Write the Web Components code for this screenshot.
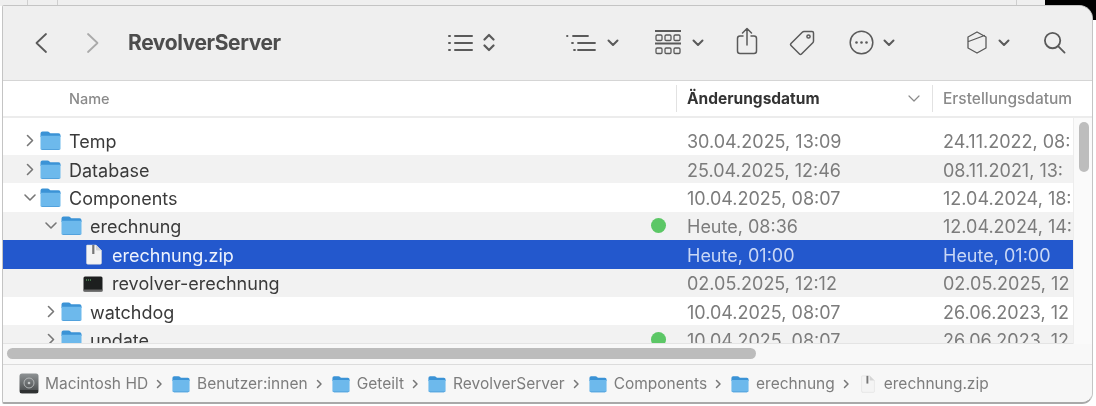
<!DOCTYPE html>
<html>
<head>
<meta charset="utf-8">
<style>
  html, body { margin: 0; height: 100%; }
  body { width: 1096px; height: 406px; overflow: hidden; background: #fff; font-family: Inter, "Liberation Sans", sans-serif; }
</style>
</head>
<body>
<finder-window>
  <finder-toolbar slot="toolbar" title="RevolverServer"></finder-toolbar>
  <list-header slot="header"></list-header>

  <file-row level="0" chevron="right" icon="folder" name="Temp" changed="30.04.2025, 13:09" created="24.11.2022, 08:"></file-row>
  <file-row level="0" chevron="right" icon="folder" name="Database" changed="25.04.2025, 12:46" created="08.11.2021, 13:"></file-row>
  <file-row level="0" chevron="down" icon="folder" name="Components" changed="10.04.2025, 08:07" created="12.04.2024, 18:"></file-row>
  <file-row level="1" chevron="down" icon="folder" name="erechnung" changed="Heute, 08:36" created="12.04.2024, 14:" dot></file-row>
  <file-row level="2" icon="zip" name="erechnung.zip" changed="Heute, 01:00" created="Heute, 01:00" selected></file-row>
  <file-row level="2" icon="exec" name="revolver-erechnung" changed="02.05.2025, 12:12" created="02.05.2025, 12"></file-row>
  <file-row level="1" chevron="right" icon="folder" name="watchdog" changed="10.04.2025, 08:07" created="26.06.2023, 12"></file-row>
  <file-row level="1" chevron="right" icon="folder" name="update" changed="10.04.2025, 08:07" created="26.06.2023, 12" dot></file-row>

  <path-bar slot="path">
    <path-crumb icon="disk">Macintosh HD</path-crumb>
    <path-crumb icon="folder">Benutzer:innen</path-crumb>
    <path-crumb icon="folder">Geteilt</path-crumb>
    <path-crumb icon="folder">RevolverServer</path-crumb>
    <path-crumb icon="folder">Components</path-crumb>
    <path-crumb icon="folder">erechnung</path-crumb>
    <path-crumb icon="zip" last>erechnung.zip</path-crumb>
  </path-bar>
</finder-window>

<script>
// shared icon drawings
const ICONS = {
  folder: `<svg viewBox="0 0 22 21" width="100%" height="100%">
    <path d="M1 3.5Q1 1.500 3 1.500H8Q9.200 1.500 10 2.400L10.800 3.200H19Q21 3.200 21 5.200V7H1Z" fill="#3b93d6"/>
    <path d="M1 5.800H21V18Q21 20 19 20H3Q1 20 1 18Z" fill="#6db9ec"/>
    <path d="M1 18Q1 20 3 20H19Q21 20 21 18V19.200H1Z" fill="#4a9bd8"/>
  </svg>`,
  zip: `<svg viewBox="0 0 18 21" width="100%" height="100%">
    <path d="M2 1H11L16.500 6.500V19Q16.500 20.300 15 20.300H3Q1.500 20.300 1.500 19V2Q1.500 1 2 1Z" fill="#f4f4f4" stroke="#d8d8d8" stroke-width=".5"/>
    <path d="M11 1V5.500Q11 6.500 12 6.500H16.500Z" fill="#d5d5d5"/>
    <rect x="7.200" y="1" width="2.200" height="9" fill="#777"/>
  </svg>`,
  exec: `<svg viewBox="0 0 20 16" width="100%" height="100%">
    <rect x=".5" y=".5" width="19" height="15" rx="1.500" fill="#1d1f1f"/>
    <rect x=".5" y="13.500" width="19" height="2" fill="#666"/>
    <path d="M3 4H8" stroke="#6fd07a" stroke-width="1.200" stroke-dasharray="1 1"/>
  </svg>`,
  disk: `<svg viewBox="0 0 20 21" width="100%" height="100%">
    <defs><linearGradient id="d" x1="0" y1="0" x2="0" y2="1"><stop offset="0" stop-color="#8e9294"/><stop offset="1" stop-color="#454849"/></linearGradient></defs>
    <rect x=".5" y=".5" width="19" height="20" rx="2.500" fill="url(#d)"/>
    <circle cx="10" cy="10" r="5" fill="none" stroke="#b5b8b9" stroke-width="1"/>
    <circle cx="10" cy="10" r="1.300" fill="#c5c8c9"/>
    <rect x="1" y="17" width="18" height="3" fill="#2f3132"/>
  </svg>`
};

const strokeAttrs = 'fill="none" stroke="currentColor" stroke-linecap="round" stroke-linejoin="round"';

class FinderWindow extends HTMLElement {
  constructor() {
    super();
    this.attachShadow({mode: 'open'});
    this.shadowRoot.innerHTML = `
    <style>
      :host { display: block; width: 1096px; height: 406px; position: relative; overflow: hidden; background: #fff; filter: blur(.4px); }
      .back { height: 6px; background: #efefef; position: relative; }
      .back i { position: absolute; top: 0; bottom: 0; width: 1px; background: #cfcfcf; }
      .back b { position: absolute; left: 1045px; right: 0; top: 0; height: 20px; background: #000; }
      .win { position: absolute; left: 2px; top: 5px; width: 1091px; height: 399px; box-sizing: border-box; display: flex; flex-direction: column;
        border: 1px solid #c4c4c4; border-radius: 2px 14px 11px 2px; border-bottom: 2px solid #a9a9a9; overflow: hidden; background: #f7f7f7; }
      .list { height: 226px; margin-right: 19px; overflow: hidden; padding-top: 8.600px; background: #fff; box-sizing: border-box; border-bottom: 1px solid #e4e4e4; }
      .main { position: relative; }
      .vtrack { position: absolute; right: 0; top: 0; bottom: 0; width: 19px; background: #fafafa; border-left: 1px solid #ededed; box-sizing: border-box; }
      .vthumb { position: absolute; left: 5px; top: 4px; width: 10px; height: 50px; border-radius: 5px; background: #bdbdbd; }
      .htrack { height: 21px; box-sizing: border-box; padding: 4px 4px; background: #f8f8f8; border-bottom: 1px solid #dcdcdc; flex: none; }
      .hthumb { width: 749px; height: 11px; border-radius: 6px; background: #bcbcbc; }
    </style>
    <div class="back"><i style="left:27px"></i><i style="left:57px"></i><i style="left:1016px"></i><b></b></div>
    <div class="win">
      <slot name="toolbar"></slot>
      <slot name="header"></slot>
      <div class="main">
        <div class="list"><slot></slot></div>
        <div class="vtrack"><div class="vthumb"></div></div>
      </div>
      <div class="htrack"><div class="hthumb"></div></div>
      <slot name="path"></slot>
    </div>`;
  }
}

class FinderToolbar extends HTMLElement {
  constructor() {
    super();
    this.attachShadow({mode: 'open'});
  }
  connectedCallback() {
    const chev = (ml) => `<svg style="margin-left:${ml}px" width="12" height="8" viewBox="0 0 12 8" ${strokeAttrs} stroke-width="2"><path d="M1.500 1.500 6 6l4.500-4.500"/></svg>`;
    this.shadowRoot.innerHTML = `
    <style>
      :host { display: flex; align-items: center; height: 75px; box-sizing: border-box; padding-bottom: 1px; background: #efefef; border-bottom: 1px solid #d5d5d5; color: #5a5a5a; flex: none; }
      svg { display: block; flex: none; }
      .title { font: 700 21px Inter, "Liberation Sans", sans-serif; color: #4d4d4d; margin-left: 28px; width: 320px; letter-spacing: -.4px; white-space: nowrap; flex: none; }
    </style>
    <svg style="margin-left:31px" width="14" height="22" viewBox="0 0 14 22" ${strokeAttrs} stroke-width="1.800"><path d="M12 2 2.500 11l9.500 9"/></svg>
    <svg style="margin-left:38px;color:#aaa" width="14" height="22" viewBox="0 0 14 22" ${strokeAttrs} stroke-width="1.800"><path d="M2 2l9.500 9L2 20"/></svg>
    <div class="title">${this.getAttribute('title')}</div>

    <svg width="25" height="18" viewBox="0 0 25 18" ${strokeAttrs} stroke-width="2"><path d="M1 2h1M1 9h1M1 16h1M7 2h17M7 9h17M7 16h17"/></svg>
    <svg style="margin-left:10px" width="12" height="19" viewBox="0 0 12 19" ${strokeAttrs} stroke-width="2.200"><path d="M1.500 6.500 6 2l4.500 4.500M1.500 12.500 6 17l4.500-4.500"/></svg>

    <svg style="margin-left:71px" width="30" height="18" viewBox="0 0 30 18" ${strokeAttrs} stroke-width="1.800"><path d="M1 2h.5M7 2h15M6 9h1M12 9h17M8 16h1M12 16h17"/></svg>
    ${chev(11)}

    <svg style="margin-left:36px" width="26" height="25" viewBox="0 0 26 25" fill="none" stroke="currentColor" stroke-width="1.300">
      <path d="M0 1h26M0 13.500h26" stroke-width="1.800"/>
      <rect x="1" y="5" width="6" height="5.500" rx="1.200"/><rect x="10" y="5" width="6" height="5.500" rx="1.200"/><rect x="19" y="5" width="6" height="5.500" rx="1.200"/>
      <rect x="1" y="18" width="6" height="5.500" rx="1.200"/><rect x="10" y="18" width="6" height="5.500" rx="1.200"/><rect x="19" y="18" width="6" height="5.500" rx="1.200"/>
    </svg>
    ${chev(11)}

    <svg style="margin-left:32px;margin-top:-4px" width="22" height="28" viewBox="0 0 22 28" ${strokeAttrs} stroke-width="1.500"><path d="M7 9H4Q1.500 9 1.500 11.500V24Q1.500 26.500 4 26.500H18Q20.500 26.500 20.500 24V11.500Q20.500 9 18 9H15M11 18V2M6.500 6 11 1.500 15.500 6"/></svg>
    <svg style="margin-left:30px" width="28" height="28" viewBox="0 0 28 28" ${strokeAttrs} stroke-width="1.500"><path d="M16 2.500H24Q25.500 2.500 25.500 4V12Q25.500 13 24.800 13.700L13.500 25Q12.500 26 11.500 25L3 16.500Q2 15.500 3 14.500L14.300 3.200Q15 2.500 16 2.500Z"/><circle cx="20.500" cy="7.500" r="1.600"/></svg>

    <svg style="margin-left:33px" width="25" height="25" viewBox="0 0 25 25" fill="none" stroke="currentColor" stroke-width="1.500"><circle cx="12.500" cy="12.500" r="11.300"/><g fill="currentColor" stroke="none"><circle cx="7.500" cy="12.500" r="1.300"/><circle cx="12.500" cy="12.500" r="1.300"/><circle cx="17.500" cy="12.500" r="1.300"/></g></svg>
    ${chev(9)}

    <svg style="margin-left:72px" width="20" height="23" viewBox="0 0 20 23" ${strokeAttrs} stroke-width="1.300"><path d="M10 1 19 6V17L10 22 1 17V6ZM1.500 10.500 17.500 4.500"/></svg>
    ${chev(11)}

    <svg style="margin-left:33px" width="23" height="23" viewBox="0 0 24 24" ${strokeAttrs} stroke-width="1.900"><circle cx="10" cy="10" r="8"/><path d="M16 16 22.500 22.500"/></svg>`;
  }
}

class ListHeader extends HTMLElement {
  constructor() {
    super();
    this.attachShadow({mode: 'open'});
    this.shadowRoot.innerHTML = `
    <style>
      :host { display: grid; grid-template-columns: 673px 256px 1fr; height: 37px; flex: none; background: #fff; border-bottom: 2px solid #ececec; box-sizing: border-box; align-items: center; font: 500 15.500px Inter, "Liberation Sans", sans-serif; color: #8a8a8a; }
      div { display: flex; align-items: center; height: 27px; box-sizing: border-box; white-space: nowrap; }
      .name { padding-left: 66px; font-size: 14.500px; }
      .changed { border-left: 1px solid #e2e2e2; padding-left: 10px; color: #333; font-weight: 700; justify-content: space-between; padding-right: 12px; }
      .created { border-left: 1px solid #e2e2e2; padding-left: 10px; overflow: hidden; margin-right: 19px; }
      svg { color: #8a8a8a; flex: none; }
    </style>
    <div class="name">Name</div>
    <div class="changed">Änderungsdatum
      <svg width="12" height="7" viewBox="0 0 12 7" ${strokeAttrs} stroke-width="1.200"><path d="M1 1 6 6l5-5"/></svg>
    </div>
    <div class="created">Erstellungsdatum</div>`;
  }
}

class FileRow extends HTMLElement {
  constructor() {
    super();
    this.attachShadow({mode: 'open'});
  }
  connectedCallback() {
    const level = Number(this.getAttribute('level')) || 0;
    const chevron = this.getAttribute('chevron');
    const icon = this.getAttribute('icon');
    const chevPath = chevron == 'down' ? 'M2 5l5 5 5-5' : 'M4.500 2.500 9.500 7.500l-5 5';
    this.shadowRoot.innerHTML = `
    <style>
      :host { display: grid; grid-template-columns: 673px 256px 1fr; height: 28.400px; align-items: center; font: 400 18px Inter, "Liberation Sans", sans-serif; color: #7c7c7c; background: #fff; white-space: nowrap; overflow: hidden; }
      :host(:nth-child(even)) { background: #f2f2f2; }
      :host([selected]) { background: #2358cd !important; color: #c9d7f5; }
      .name { display: flex; align-items: center; padding-left: ${19 + level * 21}px; padding-right: 10px; color: #3a3a3a; }
      :host([selected]) .name { color: #eef3fd; }
      .chev { width: 16px; height: 15px; flex: none; color: #777; }
      .icon { width: 23px; height: 21px; margin-left: 1px; flex: none; }
      .icon.zip { width: 18px; margin-left: 5px; margin-right: 2px; }
      .icon.exec { width: 20px; height: 16px; margin-left: 3px; margin-right: 2px; }
      .label { margin-left: 7px; padding-top: 2px; }
      .dot { margin-left: auto; width: 15px; height: 15px; border-radius: 50%; background: #5cc766; }
      .changed { padding-left: 11px; padding-top: 2px; }
      .created { padding-left: 11px; padding-top: 2px; overflow: hidden; }
    </style>
    <div class="name">
      <svg class="chev" viewBox="0 0 14 15" ${strokeAttrs} stroke-width="1.600" style="visibility:${chevron ? 'visible' : 'hidden'}"><path d="${chevPath}"/></svg>
      <span class="icon ${icon}">${ICONS[icon]}</span>
      <span class="label">${this.getAttribute('name')}</span>
      ${this.hasAttribute('dot') ? '<span class="dot"></span>' : ''}
    </div>
    <div class="changed">${this.getAttribute('changed')}</div>
    <div class="created">${this.getAttribute('created')}</div>`;
  }
}

class PathBar extends HTMLElement {
  constructor() {
    super();
    this.attachShadow({mode: 'open'});
    this.shadowRoot.innerHTML = `
    <style>
      :host { display: flex; align-items: center; flex: 1; padding-left: 16px; gap: 8px; background: #f7f7f7; font: 400 15.500px Inter, "Liberation Sans", sans-serif; color: #7d7d7d; white-space: nowrap; }
    </style>
    <slot></slot>`;
  }
}

class PathCrumb extends HTMLElement {
  constructor() {
    super();
    this.attachShadow({mode: 'open'});
  }
  connectedCallback() {
    const icon = this.getAttribute('icon');
    this.shadowRoot.innerHTML = `
    <style>
      :host { display: flex; align-items: center; gap: 6px; }
      .icon { width: 20px; height: 18px; flex: none; }
      .icon.disk { height: 21px; }
      svg.sep { flex: none; margin-left: 2px; color: #777; }
    </style>
    <span class="icon ${icon}">${ICONS[icon]}</span>
    <span><slot></slot></span>
    ${this.hasAttribute('last') ? '' : `<svg class="sep" width="7" height="10" viewBox="0 0 7 10" ${strokeAttrs} stroke-width="1.500"><path d="M1.500 1.500 5 5 1.500 8.500"/></svg>`}`;
  }
}

customElements.define('finder-window', FinderWindow);
customElements.define('finder-toolbar', FinderToolbar);
customElements.define('list-header', ListHeader);
customElements.define('file-row', FileRow);
customElements.define('path-bar', PathBar);
customElements.define('path-crumb', PathCrumb);
</script>
</body>
</html>
